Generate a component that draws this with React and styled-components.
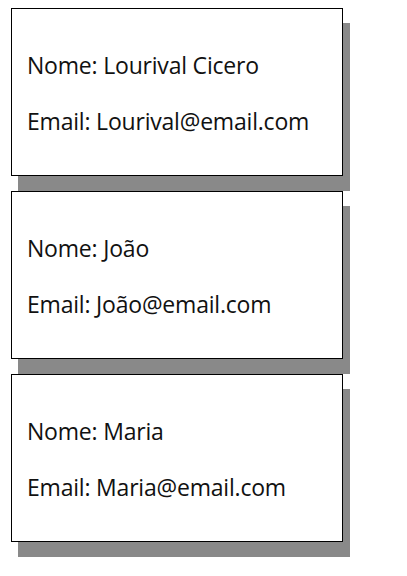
import React from 'react'
import styled, { createGlobalStyle } from "styled-components"

const GlobalStyle = createGlobalStyle`
body{
  margin:8px;
  background:#fff;
  font-family:"Segoe UI","Open Sans","Noto Sans",sans-serif;
}
`

const Card = styled.div`
width:300px;
padding:15px;
margin:0 0 15px 3px;
border:1px solid #000;
background:#fff;
box-shadow:7px 15px 0 #898989;
`

const Line = styled.p`
font-size:23px;
letter-spacing:-0.2px;
line-height:30px;
padding-top:2px;
margin:24px 0;
color:#111;
`

const users = [
  { nome: "Lourival Cicero", email: "Lourival@email.com" },
  { nome: "João", email: "João@email.com" },
  { nome: "Maria", email: "Maria@email.com" },
]

const App = () => {
  return (
    <>
      <GlobalStyle />
      {users.map((u) => (
        <Card key={u.nome}>
          <Line>Nome: {u.nome}</Line>
          <Line>Email: {u.email}</Line>
        </Card>
      ))}
    </>
  )
}

export default App
